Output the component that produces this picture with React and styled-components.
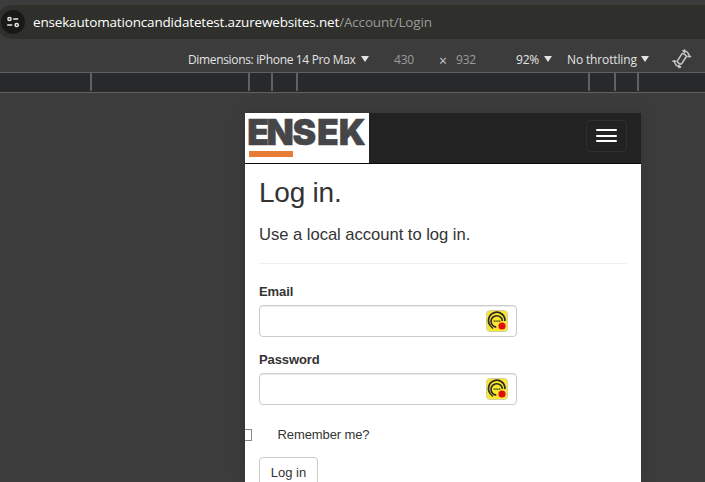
import React from "react";
import styled, { createGlobalStyle } from "styled-components";

const GlobalStyle = createGlobalStyle`
  * { box-sizing: border-box; }
  body { margin: 0; background: #3c3c3c; overflow: hidden; }
`;

const Browser = styled.div`
  width: 705px;
  height: 482px;
  overflow: hidden;
  display: flex;
  flex-direction: column;
  background: #3c3c3c;
  font-family: "Open Sans", "Noto Sans", sans-serif;
`;

const AddressBar = styled.div`
  flex: none;
  height: 34px;
  margin: 5px 0 0 -4px;
  padding-left: 5px;
  display: flex;
  align-items: center;
  background: #2f302b;
  border-radius: 17px 0 0 17px;
`;

const SiteInfo = styled.div`
  width: 24px;
  height: 24px;
  border-radius: 50%;
  background: #191a17;
  display: grid;
  place-items: center;
`;

const Url = styled.div`
  margin-left: 8px;
  font-size: 13.5px;
  line-height: 34px;
  letter-spacing: ${(p) => p.$track}px;
  white-space: nowrap;
  color: #fff;
  span { color: #9a9b98; }
`;

const DeviceBar = styled.div`
  flex: none;
  height: 33px;
  padding: 8px 0 0 188px;
  display: flex;
`;

const Item = styled.div`
  flex: none;
  width: ${(p) => p.$width}px;
  height: 25px;
  display: flex;
  align-items: flex-start;
  font-size: 12px;
  line-height: 25px;
  white-space: nowrap;
  letter-spacing: ${(p) => p.$track || 0}px;
  color: ${(p) => (p.$dim ? "#9b9b9b" : "#e3e3e3")};
`;

const Times = styled(Item)`
  padding-left: 1px;
  font-size: 14px;
  line-height: 28px;
  color: #c9c9c9;
`;

const Label = styled.span`
  flex: none;
  width: ${(p) => p.$width}px;
`;

const Caret = styled.svg`
  flex: none;
  width: 8px;
  height: 6px;
  margin-top: 9px;
  fill: #e3e3e3;
`;

const Ruler = styled.div`
  flex: none;
  height: 21px;
  display: flex;
  background: #28292b;
  border-top: 1px solid #606060;
  border-bottom: 1px solid #606060;
`;

const Tick = styled.div`
  flex: none;
  width: 2px;
  height: 18px;
  margin-left: ${(p) => p.$gap}px;
  background: #606060;
`;

const Device = styled.div`
  flex: none;
  width: 396px;
  height: 369px;
  margin: 20px 0 0 245px;
  background: #fff;
  color: #333;
  font-family: "Liberation Sans", Arial, sans-serif;
  font-size: 13px;
  box-shadow: 0 0 14px rgba(0, 0, 0, 0.15);
  overflow: hidden;
`;

const Navbar = styled.header`
  height: 51px;
  display: flex;
  justify-content: space-between;
  background: #222;
  border-bottom: 1px solid #080808;
`;

const Logo = styled.svg`
  width: 123.5px;
  height: 50px;
  overflow: visible;
  background: #fff;
`;

const MenuButton = styled.button`
  width: 41px;
  height: 32px;
  margin: 7px 14px 0 0;
  padding: 8px 9px 0;
  display: flex;
  flex-direction: column;
  gap: 3.6px;
  background: transparent;
  border: 1px solid #2f2f2f;
  border-radius: 4px;
`;

const MenuLine = styled.span`
  width: 21px;
  height: 2px;
  background: #fff;
  border-radius: 1px;
`;

const Main = styled.main`
  padding: 0 14px;
`;

const Title = styled.h2`
  margin: 13px 0 0;
  font-size: 28px;
  line-height: 32px;
  font-weight: 400;
  letter-spacing: ${(p) => p.$track}px;
`;

const Subtitle = styled.h4`
  margin: 16px 0 0;
  font-size: 16.6px;
  line-height: 20px;
  font-weight: 400;
  letter-spacing: ${(p) => p.$track}px;
`;

const Divider = styled.hr`
  margin: 18px 0 20px;
  border: 0;
  border-top: 1px solid #eee;
`;

const Field = styled.div`
  height: 68px;
`;

const FieldLabel = styled.label`
  display: block;
  height: 21px;
  line-height: 16px;
  font-weight: 700;
  letter-spacing: -0.1px;
`;

const InputBox = styled.div`
  width: 258px;
  height: 32px;
  padding-right: 8px;
  display: flex;
  justify-content: flex-end;
  align-items: center;
  border: 1px solid #ccc;
  border-radius: 4px;
  box-shadow: inset 0 1px 1px rgba(0, 0, 0, 0.075);
`;

const Remember = styled.label`
  height: 16px;
  margin: 7px 0 0 -20px;
  display: flex;
  align-items: center;
  line-height: 16px;
  letter-spacing: -0.1px;
`;

const Checkbox = styled.span`
  width: 13px;
  height: 12px;
  margin-right: 25.5px;
  border: 1px solid #8a8a8a;
`;

const LoginButton = styled.button`
  display: block;
  width: 59px;
  height: 31px;
  margin-top: 14px;
  padding: 0;
  background: #fff;
  border: 1px solid #ccc;
  border-radius: 4px;
  color: #333;
  font: 13px "Liberation Sans", Arial, sans-serif;
`;

const RotateSvg = styled.svg`
  width: 20px;
  height: 22px;
  margin-top: 1px;
`;

const Arrow = () => (
  <Caret viewBox="0 0 8 6"><path d="M0 0h8L4 6z" /></Caret>
);

const TuneIcon = () => (
  <svg width="14" height="14" viewBox="0 0 14 14" fill="none" stroke="#e8e8e5" strokeWidth="1.5">
    <circle cx="3.5" cy="4" r="1.6" />
    <path d="M7.2 4h5M1.2 10h5" />
    <circle cx="10.7" cy="10" r="1.6" />
  </svg>
);

const RotateIcon = () => (
  <RotateSvg viewBox="0 0 20 22" fill="none" stroke="#c9c9c9" strokeWidth="1.5">
    <rect x="7.2" y="5.6" width="5.2" height="10.4" rx="1.4" transform="rotate(33 9.8 10.8)" />
    <path d="M10.5 2.7C14.6 2.4 17.2 5 17.4 9.3M9.1 18.9C5 19.2 2.4 16.6 2.2 12.3" />
    <path d="M13.2 1.6l-1.8 1.2 1.8 2.2M6.4 20l1.8-1.2-1.8-2.2M15.2 8.4h4M.4 13.2h4" />
  </RotateSvg>
);

const PasswordIcon = () => (
  <svg width="22" height="22" viewBox="0 0 22 22" fill="none">
    <rect x=".5" y=".5" width="21" height="21" rx="3.5" fill="#fce72f" stroke="#d2cfae" />
    <path d="M4.2 15.4A8.2 8.2 0 1 1 18.9 11" stroke="#292a20" strokeWidth="1.7" />
    <path d="M10.3 17.1A5.7 5.7 0 1 1 16.4 11" stroke="#292a20" strokeWidth="1.6" />
    <path d="M7.6 11.2h6.8" stroke="#292a20" strokeWidth="1.3" strokeDasharray="1.3 .5" />
    <path d="M4 15.5l3 3" stroke="#292a20" strokeWidth="1.2" />
    <circle cx="16" cy="16" r="3.6" fill="#df0d10" />
  </svg>
);

const tickGaps = [90, 156, 21, 23, 290, 24, 21];

function PasswordField({ label }) {
  return (
    <Field>
      <FieldLabel>{label}</FieldLabel>
      <InputBox><PasswordIcon /></InputBox>
    </Field>
  );
}

export default function App() {
  return (
    <>
      <GlobalStyle />
      <Browser>
        <AddressBar>
          <SiteInfo><TuneIcon /></SiteInfo>
          <Url $track={-0.17}>ensekautomationcandidatetest.azurewebsites.net<span>/Account/Login</span></Url>
        </AddressBar>
        <DeviceBar>
          <Item $width={206} $track={-0.34}><Label $width={173}>Dimensions: iPhone 14 Pro Max</Label><Arrow /></Item>
          <Item $width={44} $track={-0.2} $dim>430</Item>
          <Times $width={18}>×</Times>
          <Item $width={60} $track={-0.2} $dim>932</Item>
          <Item $width={51} $track={-0.2}><Label $width={28}>92%</Label><Arrow /></Item>
          <Item $width={105} $track={-0.14}><Label $width={74}>No throttling</Label><Arrow /></Item>
          <Item $width={20}><RotateIcon /></Item>
        </DeviceBar>
        <Ruler>{tickGaps.map((gap, i) => <Tick key={i} $gap={gap} />)}</Ruler>
        <Device>
          <Navbar>
            <Logo viewBox="0 0 123.5 50">
              <text x="2.3 21.5 47.6 72 93.8" y="32.2" fontFamily="Inter" fontWeight="900" fontSize="35.5" fill="#464648" stroke="#464648" strokeWidth=".5">ENSEK</text>
              <rect x="4" y="38" width="44" height="6" fill="#e87b36" />
            </Logo>
            <MenuButton aria-label="Toggle navigation"><MenuLine /><MenuLine /><MenuLine /></MenuButton>
          </Navbar>
          <Main>
            <Title $track={-0.22}>Log in.</Title>
            <Subtitle $track={-0.03}>Use a local account to log in.</Subtitle>
            <Divider />
            <PasswordField label="Email" />
            <PasswordField label="Password" />
            <Remember><Checkbox />Remember me?</Remember>
            <LoginButton>Log in</LoginButton>
          </Main>
        </Device>
      </Browser>
    </>
  );
}
